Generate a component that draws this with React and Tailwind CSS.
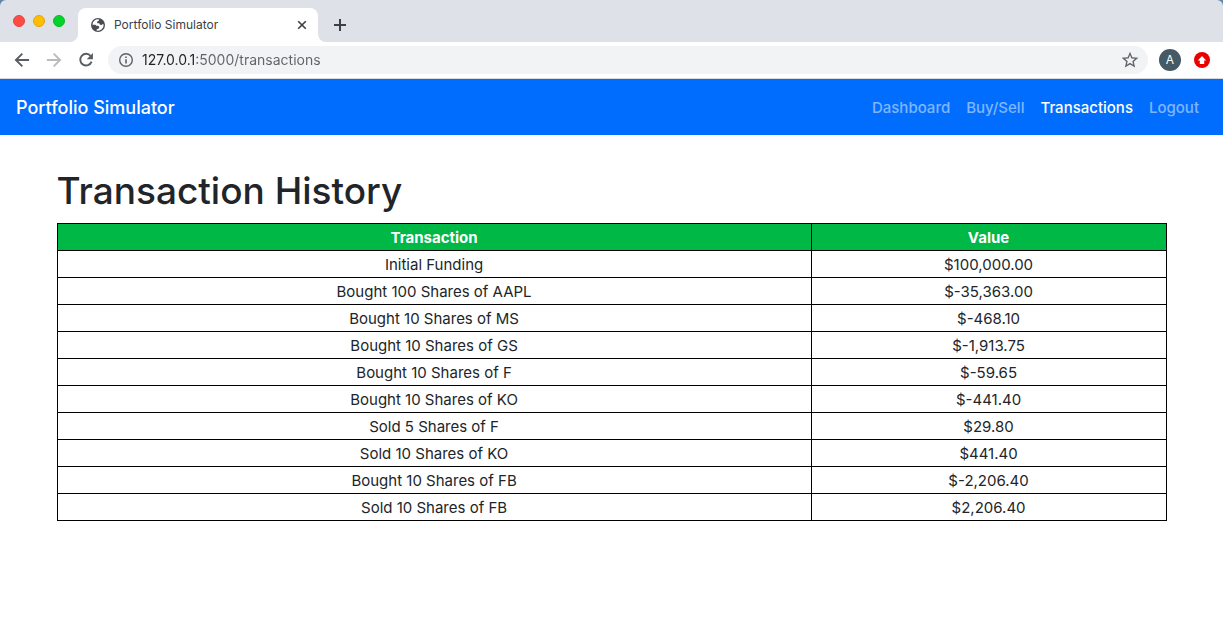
import { MdStarBorder } from 'react-icons/md';

const transactions = [
  ['Initial Funding', '$100,000.00'],
  ['Bought 100 Shares of AAPL', '$-35,363.00'],
  ['Bought 10 Shares of MS', '$-468.10'],
  ['Bought 10 Shares of GS', '$-1,913.75'],
  ['Bought 10 Shares of F', '$-59.65'],
  ['Bought 10 Shares of KO', '$-441.40'],
  ['Sold 5 Shares of F', '$29.80'],
  ['Sold 10 Shares of KO', '$441.40'],
  ['Bought 10 Shares of FB', '$-2,206.40'],
  ['Sold 10 Shares of FB', '$2,206.40'],
];

const links = ['Dashboard', 'Buy/Sell', 'Transactions', 'Logout'];

function Globe() {
  return (
    <svg className="size-4 shrink-0" viewBox="0 0 16 16" aria-hidden="true">
      <circle cx="8" cy="8" r="7" fill="#494c51" />
      <path
        d="M9 2.4V3.6L7.6 4.2 6.9 5.4 7.6 6.3H9.2L9.8 7.6 11.4 8.2 12.2 7.2H13.6A5.7 5.7 0 0 1 6.6 13.5V12.4L8.7 11.6 9.4 10 8.2 8.8H6.3L5.4 7.7H2.4A5.7 5.7 0 0 1 9 2.4Z"
        fill="#fff"
      />
    </svg>
  );
}

function ToolbarIcon({ d, solid }) {
  return (
    <svg className="size-5" viewBox="0 0 24 24" fill="none" stroke="currentColor" strokeWidth="2.3" aria-hidden="true">
      <path d={d} />
      {solid && <path d={solid} fill="currentColor" stroke="none" />}
    </svg>
  );
}

function TabStrip() {
  return (
    <div className="bg-[#6585a8]">
      <div className="flex h-[42px] items-end rounded-t-md bg-[#dee1e8] pl-[13px]">
        <div className="flex gap-2 self-start pt-[15px]">
          <button aria-label="Close window" className="size-3 rounded-full border border-[#e2463f] bg-[#ff4b45]" />
          <button aria-label="Minimize window" className="size-3 rounded-full border border-[#e5a50c] bg-[#ffbd00]" />
          <button aria-label="Zoom window" className="size-3 rounded-full border border-[#12b52c] bg-[#00d42b]" />
        </div>
        <svg className="ml-[5px] size-2" viewBox="0 0 8 8" aria-hidden="true">
          <path d="M8 0A8 8 0 0 1 0 8H8Z" fill="#fff" />
        </svg>
        <div className="flex h-[34px] w-60 items-center rounded-t-lg bg-white pr-2 pl-3">
          <Globe />
          <span className="ml-2 flex-1 text-xs text-[#3c4043]">Portfolio Simulator</span>
          <button aria-label="Close tab" className="text-[#3c4043]">
            <svg className="size-4" viewBox="0 0 16 16" aria-hidden="true">
              <path d="M4.2 4.2 11.8 11.8M11.8 4.2 4.2 11.8" stroke="currentColor" strokeWidth="1.6" />
            </svg>
          </button>
        </div>
        <svg className="size-2" viewBox="0 0 8 8" aria-hidden="true">
          <path d="M0 0A8 8 0 0 0 8 8H0Z" fill="#fff" />
        </svg>
        <button aria-label="New tab" className="mb-[7px] ml-1 text-[#3c4043]">
          <svg className="size-5" viewBox="0 0 20 20" aria-hidden="true">
            <path d="M10 4V16M4 10H16" stroke="currentColor" strokeWidth="2" />
          </svg>
        </button>
      </div>
    </div>
  );
}

function Toolbar() {
  return (
    <div className="flex h-[37px] items-center border-b border-[#d5d8dc] bg-white pr-[13px] pl-3">
      <div className="flex gap-3">
        <button aria-label="Back" className="text-[#5a5d61]">
          <ToolbarIcon d="M20.5 12H5M12.4 4.3 4.7 12l7.7 7.7" />
        </button>
        <button aria-label="Forward" className="text-[#b9bbbe]">
          <ToolbarIcon d="M3.5 12H19M11.6 4.3 19.3 12l-7.7 7.7" />
        </button>
        <button aria-label="Reload" className="text-[#5a5d61]">
          <ToolbarIcon d="M17.6 7.2A7 7 0 1 0 18.7 14" solid="M20.3 3.5V11H12.8Z" />
        </button>
      </div>
      <div className="ml-3 flex h-7 flex-1 items-center rounded-full bg-[#f1f3f4] pr-2 pl-[10px] text-[#5f6368]">
        <svg className="size-4 shrink-0" viewBox="0 0 16 16" aria-hidden="true">
          <circle cx="8" cy="8" r="6.3" fill="none" stroke="currentColor" strokeWidth="1.4" />
          <path d="M8 7.3V11.5M8 4.4V6" stroke="currentColor" strokeWidth="1.6" />
        </svg>
        <input
          aria-label="Address"
          defaultValue="127.0.0.1:5000/transactions"
          className="ml-2 min-w-0 flex-1 bg-[linear-gradient(90deg,#202124_54px,#5f6368_54px)] bg-clip-text text-sm text-transparent caret-black outline-none"
        />
        <button aria-label="Bookmark this page"><MdStarBorder className="size-5" /></button>
      </div>
      <button aria-label="Profile" className="ml-[11px] flex size-[22px] items-center justify-center rounded-full bg-[#455a64] text-xs text-white">
        A
      </button>
      <button aria-label="Update" className="ml-[13px] size-4 rounded-full bg-[#ea0000]">
        <svg className="size-4" viewBox="0 0 16 16" aria-hidden="true">
          <path d="M8 4 12.2 8.4H10.2V12H5.8V8.4H3.8Z" fill="#fff" />
        </svg>
      </button>
    </div>
  );
}

export default function App() {
  return (
    <div className="min-h-screen bg-white font-['Inter','Liberation_Sans',sans-serif] text-[#212529]">
      <TabStrip />
      <Toolbar />
      <nav className="flex h-14 items-center justify-between bg-[#006dff] pt-0.5 pr-6 pl-4">
        <a href="#home" className="text-lg font-medium text-white">Portfolio Simulator</a>
        <div className="flex gap-4 text-[15px] font-medium">
          {links.map((l) => (
            <a key={l} href={'#' + l} className={l === 'Transactions' ? 'text-white' : 'text-white/50'}>
              {l}
            </a>
          ))}
        </div>
      </nav>
      <main className="mx-auto max-w-[1140px] px-[15px] pt-8">
        <h1 className="mb-2 text-[37px] leading-12 font-medium">Transaction History</h1>
        <table className="w-full table-fixed border-collapse text-center text-[15px] leading-6">
          <thead className="bg-[#00b846] text-white">
            <tr>
              <th className="w-[68%] border border-black px-0 pt-0.5 pb-0 font-bold">Transaction</th>
              <th className="border border-black px-0 pt-0.5 pb-0 font-bold">Value</th>
            </tr>
          </thead>
          <tbody>
            {transactions.map(([name, value]) => (
              <tr key={name}>
                <td className="border border-black px-0 pt-0.5 pb-0">{name}</td>
                <td className="border border-black px-0 pt-0.5 pb-0">{value}</td>
              </tr>
            ))}
          </tbody>
        </table>
      </main>
    </div>
  );
}
